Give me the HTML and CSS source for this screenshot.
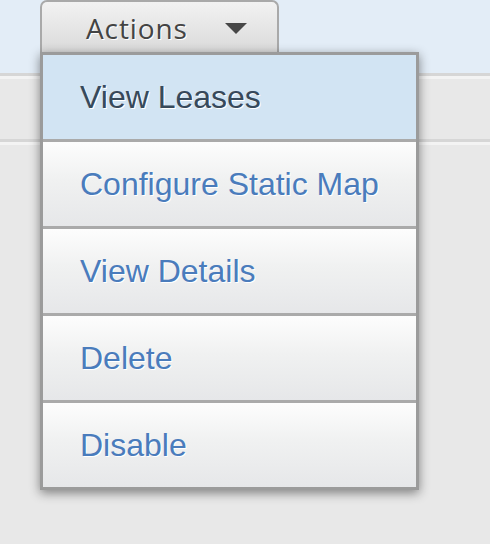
FILE: index.html
```html
<!DOCTYPE html>
<html>
<head>
<meta charset="utf-8">
<link rel="stylesheet" href="styles.css">
</head>
<body>
<div class="page">
  <div class="topbar"></div>
  <div class="rule"></div>
  <div class="band"></div>
  <div class="rule"></div>
  <div class="rest"></div>
</div>
<div class="dropdown">
  <button class="actions-btn"><span class="label">Actions</span><span class="caret"></span></button>
  <ul class="menu">
    <li class="item active">View Leases</li>
    <li class="item">Configure Static Map</li>
    <li class="item">View Details</li>
    <li class="item">Delete</li>
    <li class="item">Disable</li>
  </ul>
</div>
</body>
</html>
```
FILE: styles.css
```css
html, body {
  margin: 0;
  padding: 0;
}
body {
  background: #e8e8e8;
  font-family: "Liberation Sans", Arial, sans-serif;
  width: 490px;
  height: 544px;
  overflow: hidden;
  position: relative;
}
.topbar {
  height: 73px;
  background: #e3edf7;
}
.rule {
  height: 3px;
  background: #d6d6d6;
  border-bottom: 3px solid #f3f3f3;
}
.band {
  height: 60px;
  background: #e8e8e8;
}
.rest {
  height: 400px;
  background: #e8e8e8;
}
.dropdown {
  position: absolute;
  left: 40px;
  top: 0;
}
.actions-btn {
  display: flex;
  align-items: center;
  box-sizing: border-box;
  width: 239px;
  height: 54px;
  margin: 0;
  padding: 0 0 0 44px;
  border: 2px solid #a9a9a9;
  border-bottom: none;
  border-radius: 7px 7px 0 0;
  background: linear-gradient(#f2f2f2, #d9d9d9);
  font-family: "Open Sans", "Liberation Sans", sans-serif;
  font-size: 28px;
  letter-spacing: 0.9px;
  color: #444;
  text-shadow: 1px 1px 0 #fff;
}
.label {
  width: 139px;
  text-align: left;
}
.caret {
  width: 0;
  height: 0;
  margin-top: 0;
  border-left: 11px solid transparent;
  border-right: 11px solid transparent;
  border-top: 11px solid #474747;
}
.menu {
  list-style: none;
  margin: -2px 0 0 0;
  padding: 0;
  width: 373px;
  border: 3px solid #9b9b9b;
  background: #fff;
  box-shadow: 0 3px 10px rgba(0, 0, 0, 0.45);
  position: relative;
}
.item {
  display: flex;
  align-items: center;
  padding-left: 37px;
  padding-top: 1px;
  box-sizing: border-box;
  font-size: 32px;
  color: #4a7cbc;
  text-shadow: 1px 1px 0 #fff;
  background: linear-gradient(#fdfdfd, #f0f1f1 45%, #e6e7e9);
  border-top: 3px solid #aaaaaa;
  height: 87px;
}
.item:first-child {
  border-top: none;
  height: 84px;
}
.item.active {
  background: #d2e4f3;
  color: #37495b;
}
```
